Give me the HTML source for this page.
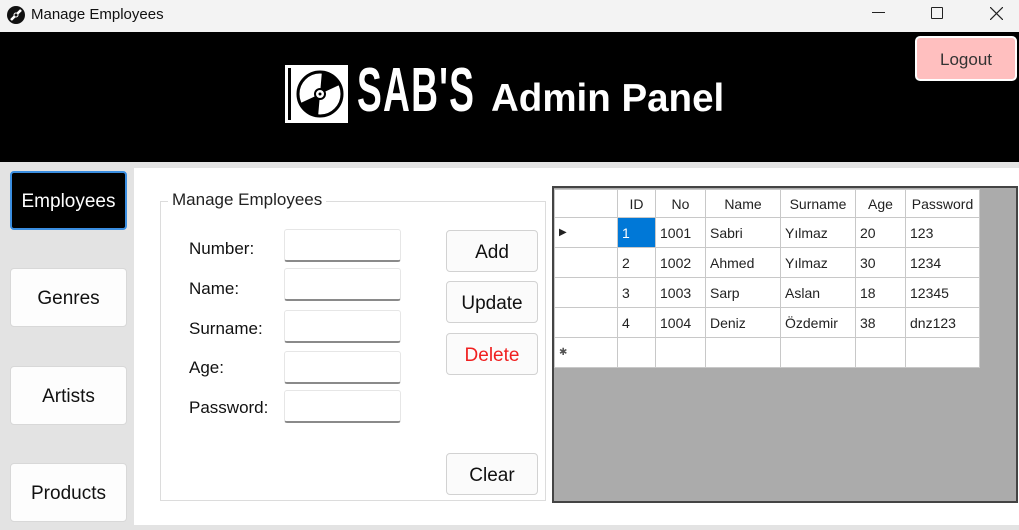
<!DOCTYPE html>
<html><head><meta charset="utf-8"><style>
*{margin:0;padding:0;box-sizing:border-box}
body{width:1019px;height:530px;overflow:hidden;background:#e3e3e3;font-family:"Segoe UI","Liberation Sans",sans-serif;position:relative;color:#222}
.a{position:absolute}
.tb{left:0;top:0;width:1019px;height:32px;background:#f3f3f3}
.hdr{left:0;top:32px;width:1019px;height:130px;background:#000}
.main{left:134px;top:168px;width:885px;height:357px;background:#fff}
.nb{position:absolute;left:10px;width:117px;height:59px;background:#fdfdfd;border:1px solid #d8d8d8;border-radius:4px;font-size:19px;text-align:center;line-height:60px;color:#111}
.lbl{position:absolute;left:189px;font-size:17px;color:#111}
.inp{position:absolute;left:284px;width:117px;height:33px;background:#fff;border:1px solid #e6e6e6;border-bottom:2px solid #8a8a8a;border-radius:3px}
.btn{position:absolute;left:446px;width:92px;height:42px;background:#fbfbfb;border:1px solid #d2d2d2;border-radius:4px;font-size:19px;text-align:center;line-height:43px;color:#111}
table{border-collapse:collapse;font-size:14px;position:absolute;left:554px;top:189px;background:#fff}
td{border:1px solid #c8c8c8;height:30px;padding:0 4px;white-space:nowrap}
tr:first-child td{height:28px;text-align:center}
</style></head><body>
<div class="a tb"></div>
<svg class="a" style="left:6px;top:5px" width="20" height="20" viewBox="0 0 20 20"><circle cx="10" cy="10" r="9" fill="#111"/><path d="M5 15 L15 5" stroke="#fff" stroke-width="2.5"/><circle cx="10" cy="10" r="2" fill="#111" stroke="#fff"/></svg>
<div class="a" style="left:31px;top:6px;font-size:15px;color:#111">Manage Employees</div>
<div class="a" style="left:872px;top:12px;width:13px;height:1px;background:#222"></div>
<div class="a" style="left:931px;top:7px;width:12px;height:12px;border:1px solid #222;border-radius:1px"></div>
<svg class="a" style="left:990px;top:7px" width="13" height="13"><path d="M0 0L13 13M13 0L0 13" stroke="#222" stroke-width="1.2"/></svg>
<div class="a hdr"></div>
<div class="a" style="left:915px;top:36px;width:102px;height:45px;background:#ffbfbf;border:2px solid #fff;border-radius:5px;font-size:17px;text-align:center;line-height:43px;color:#333">Logout</div>
<svg class="a" style="left:284px;top:64px" width="66" height="60" viewBox="0 0 66 60"><rect x="1" y="1" width="63" height="58" fill="#fff"/><rect x="4" y="4" width="3" height="52" fill="#000"/><circle cx="36" cy="30" r="22" fill="#fff" stroke="#000" stroke-width="3"/><path d="M36 30 L47 11 A22 22 0 0 0 25 11 Z M36 30 L25 49 A22 22 0 0 0 47 49 Z" fill="#000" transform="rotate(35 36 30)"/><circle cx="36" cy="30" r="5" fill="#fff" stroke="#000" stroke-width="2"/><circle cx="36" cy="30" r="1.5" fill="#000"/></svg>
<div class="a" style="left:357px;top:55px;font-family:'Liberation Sans',sans-serif;font-weight:bold;font-size:62px;color:#fff;letter-spacing:2px;transform:scaleX(.6);transform-origin:left">SAB'S</div>
<div class="a" style="left:491px;top:77px;font-weight:bold;font-size:38.5px;color:#fff;font-family:'Liberation Sans',sans-serif">Admin Panel</div>
<div class="a main"></div>
<div class="nb" style="top:171px;background:#000;color:#fff;border:2px solid #3b8ee0;line-height:57px">Employees</div>
<div class="nb" style="top:268px">Genres</div>
<div class="nb" style="top:366px">Artists</div>
<div class="nb" style="top:463px">Products</div>
<div class="a" style="left:160px;top:201px;width:386px;height:300px;border:1px solid #dcdcdc"></div>
<div class="a" style="left:168px;top:190px;background:#fff;padding:0 4px;font-size:17px;color:#222">Manage Employees</div>
<div class="lbl" style="top:239px">Number:</div><div class="inp" style="top:229px"></div>
<div class="lbl" style="top:279px">Name:</div><div class="inp" style="top:268px"></div>
<div class="lbl" style="top:319px">Surname:</div><div class="inp" style="top:310px"></div>
<div class="lbl" style="top:358px">Age:</div><div class="inp" style="top:351px"></div>
<div class="lbl" style="top:398px">Password:</div><div class="inp" style="top:390px"></div>
<div class="btn" style="top:230px">Add</div>
<div class="btn" style="top:281px">Update</div>
<div class="btn" style="top:333px;color:#f02020">Delete</div>
<div class="btn" style="top:453px">Clear</div>
<div class="a" style="left:552px;top:186px;width:466px;height:317px;background:#ababab;border:2px solid #444"></div>
<table>
<tr><td style="width:63px"></td><td style="width:38px">ID</td><td style="width:50px">No</td><td style="width:75px">Name</td><td style="width:75px">Surname</td><td style="width:50px">Age</td><td style="width:74px">Password</td></tr>
<tr><td style="font-size:10px">&#9654;</td><td style="background:#0078d7;color:#fff">1</td><td>1001</td><td>Sabri</td><td>Yılmaz</td><td>20</td><td>123</td></tr>
<tr><td></td><td>2</td><td>1002</td><td>Ahmed</td><td>Yılmaz</td><td>30</td><td>1234</td></tr>
<tr><td></td><td>3</td><td>1003</td><td>Sarp</td><td>Aslan</td><td>18</td><td>12345</td></tr>
<tr><td></td><td>4</td><td>1004</td><td>Deniz</td><td>Özdemir</td><td>38</td><td>dnz123</td></tr>
<tr><td style="font-size:10px;color:#555">&#10033;</td><td></td><td></td><td></td><td></td><td></td><td></td></tr>
</table>
</body></html>
